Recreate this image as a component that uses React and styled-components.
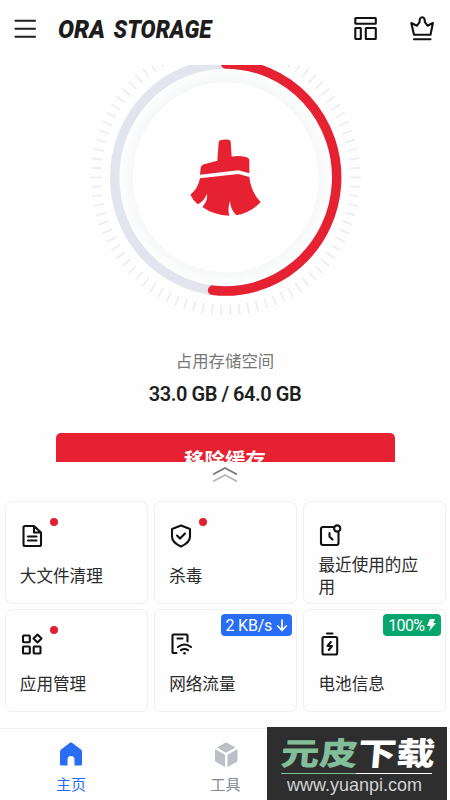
import React from "react";
import styled, { createGlobalStyle } from "styled-components";

const GlobalStyle = createGlobalStyle`
  * { box-sizing: border-box; }
  body { margin: 0; background: #fefefe; }
`;

const Screen = styled.div`
  width: 450px;
  height: 800px;
  overflow: hidden;
  display: flex;
  flex-direction: column;
  position: relative;
  background: #fefefe;
  color: #222;
  font-family: Roboto, "Noto Sans CJK SC", sans-serif;
`;

const Header = styled.header`
  height: 65px;
  flex: none;
  display: flex;
  align-items: flex-start;
  padding: 15px 15px 0 12.5px;
`;

const Icon = styled.svg`
  display: block;
  flex: none;
  overflow: visible;
  fill: none;
  stroke: ${(p) => p.$color || "#111"};
  stroke-width: ${(p) => p.$stroke || 2.1};
  stroke-linecap: round;
  stroke-linejoin: round;
`;

const Logo = styled.svg`
  display: block;
  margin-left: 19px;
  margin-right: auto;
  overflow: visible;
  fill: #1d1d1d;
  font: italic 900 25px Roboto, sans-serif;
`;

const HeaderActions = styled.div`
  display: flex;
  gap: 32px;
`;

const Overview = styled.section`
  height: 396.5px;
  flex: none;
  overflow: hidden;
  display: flex;
  flex-direction: column;
  align-items: center;
`;

const Dial = styled.svg`
  display: block;
  flex: none;
`;

const UsageLabel = styled.div`
  margin-top: 24px;
  height: 26px;
  line-height: 26px;
  font-size: 16.4px;
  color: #777;
`;

const UsageValue = styled.div`
  margin-top: 5px;
  height: 28px;
  line-height: 28px;
  font-size: 20px;
  letter-spacing: -0.44px;
  font-weight: 600;
  color: #1f1f1f;
`;

const CleanButton = styled.button`
  margin-top: 24.5px;
  width: 339px;
  height: 54px;
  flex: none;
  border: 0;
  padding: 0;
  border-radius: 5px;
  background: #e62132;
  color: #fff;
  font: 700 20.5px/53px "Noto Sans CJK SC", sans-serif;
`;

const Handle = styled.div`
  height: 39.5px;
  flex: none;
  display: flex;
  justify-content: center;
  padding-top: 5px;
`;

const Grid = styled.main`
  flex: none;
  display: grid;
  grid-template-columns: repeat(3, 1fr);
  grid-auto-rows: 103px;
  gap: 5px 6px;
  padding: 0 3.5px 0 4.5px;
`;

const Card = styled.div`
  position: relative;
  display: flex;
  flex-direction: column;
  border: 1.5px solid #f1f1f1;
  border-radius: 7px;
  padding: 21.5px 13px 0 14.3px;
`;

const CardLabel = styled.div`
  margin-top: ${(p) => (p.$twoLine ? "7px" : "18px")};
  font-size: 16.6px;
  line-height: 22.5px;
  color: #2b2b2b;
`;

const Dot = styled.span`
  position: absolute;
  left: 44.5px;
  top: 16px;
  width: 8px;
  height: 8px;
  border-radius: 50%;
  background: #e0202f;
`;

const Tag = styled.span`
  position: absolute;
  top: 4px;
  right: 4px;
  height: 22px;
  display: flex;
  align-items: center;
  gap: ${(p) => p.$gap};
  padding: 1px 5px 0 5px;
  border-radius: 4px;
  background: ${(p) => p.$bg};
  color: #fff;
  font-size: 16px;
  letter-spacing: ${(p) => p.$tracking};
  line-height: 20px;
  white-space: nowrap;
`;

const Nav = styled.nav`
  margin-top: 16px;
  height: 73px;
  flex: none;
  display: grid;
  grid-template-columns: 142px 167px 141px;
  border-top: 1.5px solid #f3f3f3;
`;

const NavItem = styled.div`
  display: flex;
  flex-direction: column;
  align-items: center;
  padding-top: 11.5px;
  gap: 6.5px;
  font-size: 15px;
  line-height: 24px;
  color: ${(p) => p.$color};
`;

const Watermark = styled.div`
  position: absolute;
  left: 267px;
  top: 727px;
  width: 180px;
  height: 73px;
  background: #2e2e2e;
`;

const WatermarkArt = styled.svg`
  display: block;
`;

const WatermarkTitle = styled.text`
  font: 900 35px "Noto Sans CJK SC", sans-serif;
`;

const WatermarkUrl = styled.text`
  font: 19px "Liberation Sans", sans-serif;
  fill: #d2d2d2;
`;

const R = 111;
const ticks = Array.from({ length: 90 }, (_, i) => i * 4);
const end = (186.8 * Math.PI) / 180;
const arc = `M0 ${-R} A${R} ${R} 0 1 1 ${R * Math.sin(end)} ${-R * Math.cos(end)}`;

function StorageDial() {
  return (
    <Dial width="450" height="260" viewBox="0 65 450 260">
      <defs>
        <radialGradient id="halo">
          <stop offset="0.86" stopColor="#f6f7f8" />
          <stop offset="1" stopColor="#fefefe" />
        </radialGradient>
      </defs>
      <g transform="translate(225.7 177.4) scale(1 1.023)" fill="none">
        <circle r="107" fill="url(#halo)" />
        <circle r="93" fill="#fefefe" />
        {ticks.map((a) => (
          <path key={a} d="M124.5 0H134.8" stroke="#eceff3" strokeWidth="1.9" transform={`rotate(${a})`} />
        ))}
        <circle r={R} stroke="#e2e5ee" strokeWidth="9.4" />
        <path d={arc} stroke="#e62132" strokeWidth="9.4" strokeLinecap="round" />
      </g>
      <g transform="translate(175 125) scale(.33333)" fill="#e62132">
        <path d="M131 51Q132 46 138 45Q149 42 161 44Q166 44 167 50L170 95Q191 90 212 96Q223 98 223 106V145L190 136L75 149L77 128Q78 120 90 117L127 107Z" />
        <path d="M75 160L190 147L223 156Q228 202 257 231Q230 262 184 271Q166 253 165 228Q157 250 163 272Q115 270 82 246Q99 227 96 207Q87 229 68 238Q54 226 46 209Q69 192 75 160Z" />
      </g>
    </Dial>
  );
}

const FileIcon = () => (
  <Icon width="22" height="24" viewBox="0 0 22 24">
    <path d="M14 2H5Q3.500 2 3.500 3.500V20.500Q3.500 22 5 22H19.500Q21 22 21 20.500V8.500ZM14 2V8.500H21M8 12.500H16.500M8 16.500H16.500" />
  </Icon>
);
const ShieldIcon = () => (
  <Icon width="22" height="24" viewBox="0 0 22 24">
    <path d="M12 1.500L21 5V12.500Q21 18.500 12 22.500Q3 18.500 3 12.500V5ZM8 11.500L11 14.500L16 9.500" />
  </Icon>
);
const RecentIcon = () => (
  <Icon width="22" height="24" viewBox="0 0 22 24">
    <path d="M15 3H5Q3 3 3 5V19Q3 21 5 21H18.500Q20.500 21 20.500 19V8.500M11.500 9V12.500L14.500 15.500" />
    <circle cx="19.200" cy="4.500" r="3.100" />
  </Icon>
);
const AppsIcon = () => (
  <Icon width="22" height="24" viewBox="0 0 22 24">
    <rect x="3" y="3.500" width="6.800" height="6.800" rx=".7" />
    <rect x="3" y="14.500" width="6.800" height="7" rx=".7" />
    <rect x="13.700" y="14.500" width="6.800" height="7" rx=".7" />
    <path d="M17.500 2.500L21.500 6.500L17.500 10.500L13.500 6.500Z" />
  </Icon>
);
const TrafficIcon = () => (
  <Icon width="22" height="24" viewBox="0 0 22 24">
    <path d="M7.500 21H4.500Q3.500 21 3.500 20V3.500Q3.500 2.500 4.500 2.500H17.500Q18.500 2.500 18.500 3.500V9.500M8.500 6.500H13.500M9 15Q15.500 10 22 15M12 18.200Q15.500 15.700 19 18.200" />
    <circle cx="15.500" cy="21.300" r="1.300" fill="#111" stroke="none" />
  </Icon>
);
const BatteryIcon = () => (
  <Icon width="22" height="24" viewBox="0 0 22 24">
    <path d="M9 1.500H14.500" />
    <rect x="4.500" y="5" width="14.700" height="17.500" rx="1.500" />
    <path d="M12.800 10L9.500 14H14L10.800 18" />
  </Icon>
);

const DownTag = () => (
  <Tag $bg="#286df4" $gap="5px" $tracking="-0.2px">
    2 KB/s
    <Icon width="10" height="12" viewBox="0 0 10 12" $color="#fff" $stroke={1.7}>
      <path d="M5 0V10M.8 6L5 10.300L9.200 6" />
    </Icon>
  </Tag>
);
const ChargeTag = () => (
  <Tag $bg="#07a66d" $gap="3px" $tracking="-0.6px">
    100%
    <Icon width="9" height="13" viewBox="0 0 9 13" $color="none">
      <path d="M3 0H8L6.200 4H9L2 12.500L3.500 7H0Z" fill="#fff" />
    </Icon>
  </Tag>
);

const cards = [
  { label: "大文件清理", icon: FileIcon, dot: true },
  { label: "杀毒", icon: ShieldIcon, dot: true },
  { label: "最近使用的应用", icon: RecentIcon, twoLine: true },
  { label: "应用管理", icon: AppsIcon, dot: true },
  { label: "网络流量", icon: TrafficIcon, tag: DownTag },
  { label: "电池信息", icon: BatteryIcon, tag: ChargeTag },
];

export default function App() {
  return (
    <Screen>
      <GlobalStyle />
      <Header>
        <Icon width="26" height="26" viewBox="0 0 26 26" $color="#1c1c1c">
          <path d="M2.500 5.700H22M2.500 13.700H22M2.500 21.800H22" />
        </Icon>
        <Logo width="154" height="26" viewBox="0 0 154 26">
          <text x="0" y="22.500" textLength="47" lengthAdjust="spacingAndGlyphs">ORA</text>
          <text x="55.500" y="22.500" textLength="98" lengthAdjust="spacingAndGlyphs">STORAGE</text>
        </Logo>
        <HeaderActions>
          <Icon width="24" height="26" viewBox="0 0 24 26">
            <rect x="2.300" y="3" width="20.500" height="5.700" rx=".5" />
            <rect x="2.300" y="13" width="5.500" height="11" rx=".5" />
            <rect x="12.800" y="13" width="10" height="11" rx=".5" />
          </Icon>
          <Icon width="26" height="26" viewBox="0 0 26 26">
            <path d="M2.300 8L5 19.700H21.500L23.900 8L18.500 10.700L15.800 7Q16 2.300 13.200 2.300Q10.400 2.300 10.600 7L8 10.700ZM5 24.300H21.500" />
          </Icon>
        </HeaderActions>
      </Header>
      <Overview>
        <StorageDial />
        <UsageLabel>占用存储空间</UsageLabel>
        <UsageValue>33.0 GB / 64.0 GB</UsageValue>
        <CleanButton>移除缓存</CleanButton>
      </Overview>
      <Handle>
        <Icon width="24" height="16" viewBox="0 0 24 16" $color="#777" $stroke={1.8}>
          <path d="M.8 7L12 1L23.200 7" />
          <path d="M.8 14L12 8L23.200 14" stroke="#b5b5b5" />
        </Icon>
      </Handle>
      <Grid>
        {cards.map(({ label, icon: CardIcon, dot, tag: CardTag, twoLine }) => (
          <Card key={label}>
            <CardIcon />
            {dot && <Dot />}
            {CardTag && <CardTag />}
            <CardLabel $twoLine={twoLine}>{label}</CardLabel>
          </Card>
        ))}
      </Grid>
      <Nav>
        <NavItem $color="#286df4">
          <Icon width="24" height="26" viewBox="0 0 24 26" $color="none">
            <path d="M11 1.700Q12 1 13 1.700L22 8.500Q23 9.300 23 10.500V23Q23 24.500 21.500 24.500H15.500V18.500A3.500 3.500 0 0 0 8.500 18.500V24.500H2.500Q1 24.500 1 23V10.500Q1 9.300 2 8.500Z" fill="#286df4" />
          </Icon>
          主页
        </NavItem>
        <NavItem $color="#85888f">
          <Icon width="24" height="26" viewBox="0 0 24 26" $color="none">
            <path d="M3 6.500L11.200 1.700Q12 1.200 12.800 1.700L21.500 6.500L12 11.800ZM1 9.300Q1 8 2.200 8.700L11 13.700V26L2 21Q1 20.300 1 19.500ZM23.500 9.300Q23.500 8 22.300 8.700L13.500 13.700V26L22.500 21Q23.500 20.300 23.500 19.500Z" fill="#bdbfc6" />
          </Icon>
          工具
        </NavItem>
      </Nav>
      <Watermark>
        <WatermarkArt width="180" height="73" viewBox="0 0 180 73">
          <g transform="translate(13 38) skewX(-5) scale(1 .9)">
            <WatermarkTitle fill="#83be9a" textLength="77" lengthAdjust="spacingAndGlyphs">元皮</WatermarkTitle>
            <WatermarkTitle x="77" fill="#fff" textLength="77" lengthAdjust="spacingAndGlyphs">下载</WatermarkTitle>
          </g>
          <path d="M14 46.500H89" stroke="#83be9a" />
          <path d="M89 46.500H165" stroke="#fff" />
          <WatermarkUrl x="20" y="63.500" textLength="135" lengthAdjust="spacingAndGlyphs">www.yuanpi.com</WatermarkUrl>
        </WatermarkArt>
      </Watermark>
    </Screen>
  );
}
